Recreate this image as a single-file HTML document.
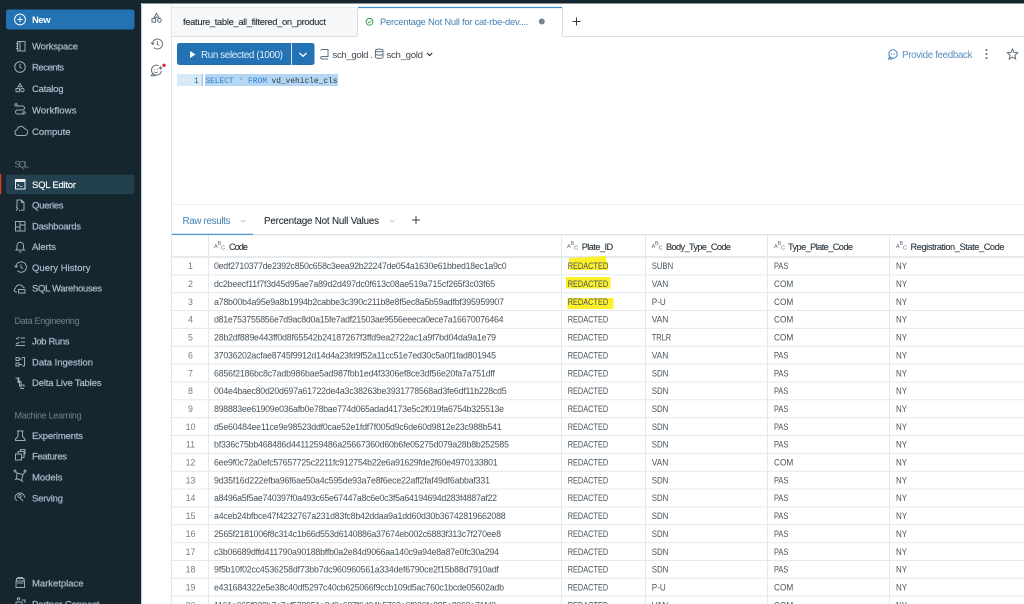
<!DOCTYPE html>
<html><head><meta charset="utf-8"><title>SQL Editor</title>
<style>
html,body{margin:0;padding:0;width:1024px;height:604px;overflow:hidden;background:#fff}
svg{display:block}
text{font-family:"Liberation Sans",sans-serif;font-size:8.8px;fill:#47535c}
.n{fill:#6f7d87;text-anchor:middle}
.s{fill:#a7bccb;font-size:9.5px;stroke:#a7bccb;stroke-width:.22}
.h{fill:#6d8595;font-size:9px}
.th{fill:#2b3740;font-size:9.2px;stroke:#2b3740;stroke-width:.12}
.tb{fill:#3c4851;font-size:9.6px}
.i{fill:none;stroke:#97adbb;stroke-width:1}
.k{fill:none;stroke:#5f6f7b;stroke-width:1}
.m{font-family:"Liberation Mono",monospace;font-size:7.9px}
.a{font-size:5.5px;fill:#5f6f7b}
</style></head><body>
<svg width="1024" height="604" viewBox="0 0 1024 604" xmlns="http://www.w3.org/2000/svg">
<filter id="b" x="0" y="0" width="100%" height="100%"><feGaussianBlur stdDeviation="0.28"/></filter>
<g filter="url(#b)">
<rect width="1024" height="604" fill="#fff"/>
<rect width="1024" height="3.5" fill="#13262f"/>
<rect width="141" height="604" fill="#13262f"/>
<rect x="141" y="3" width="1.2" height="601" fill="#c9d6e0"/>
<rect x="171" y="4" width="1" height="600" fill="#dfe6ec"/>

<rect x="6" y="9.5" width="128.5" height="20" rx="2.5" fill="#2272b4"/>
<circle cx="20" cy="19.5" r="5.4" fill="none" stroke="#fff" stroke-width="1"/>
<path d="M20 16.8v5.4M17.3 19.5h5.4" stroke="#fff" stroke-width="1"/>
<text x="32" y="22.8" textLength="18.5" style="fill:#fff;font-size:9.4px;font-weight:bold">New</text>

<rect x="0" y="174" width="1.3" height="20" fill="#d8392b"/>
<rect x="6" y="174.5" width="128.5" height="19.5" rx="2.5" fill="#22404d"/>

<g>
<path class="i" d="M17.5 41.5h7.5v9.5h-7.5zM20 41.5v9.5M16 43.5h2.5M16 46h2.5M16 48.5h2.5"/>
<circle class="i" cx="20" cy="67" r="5.3"/><path class="i" d="M20 64v3.3l1.8 1.2"/>
<path class="i" d="M20 83.5l2 3.2h-4zM16 88.5h3.4v3.2h-3.4zM20.7 90.1a1.7 1.7 0 1 0 3.4 0a1.7 1.7 0 1 0-3.4 0"/>
<path class="i" d="M16 106h6.5a2 2 0 0 1 0 4h-5a2 2 0 0 0 0 4h6.5M16 106a1.2 1.2 0 1 1 .1 0M24 114a1.2 1.2 0 1 1 .1 0"/>
<path class="i" d="M17.5 135.5a3 3 0 0 1-.5-5.8a4 4 0 0 1 7.5-1a3.5 3.5 0 0 1 .8 6.8z"/>
<path d="M15.5 179.5h9.5v9.5h-9.5z" fill="none" stroke="#e8eef2"/><path d="M15.5 179.5h9.5v2.5h-9.5z" fill="#e8eef2"/><path d="M17.5 184l1.5 1.2l-1.5 1.2M20 186.5h2.5" fill="none" stroke="#e8eef2" stroke-width=".8"/>
<path class="i" d="M17 208v-8h4.5l2.500 2.500v7.500h-3M21.500 200v2.500h2.500M16 207l1.800 1.800l-1.800 1.800M19 210.500h1.500"/>
<path class="i" d="M15.5 221.5h9.5v9.5h-9.5zM20 221.5v9.5M15.5 227h4.5M20 225h5"/>
<path class="i" d="M16 250h8.5l-1-1.5v-3a3.2 3.2 0 0 0-6.500 0v3zM19 252h2.500"/>
<path class="i" d="M16 267a5.2 5.2 0 1 1 1.500 3.700M14.800 265.500l1.200 1.800l1.800-1.200M21 264.500v3l2 1"/>
<path class="i" d="M17 292h-1a2 2 0 0 1-.5-3.800a4 4 0 0 1 7.500-1.200a3 3 0 0 1 1.500 1M18.500 289.500h6.500v3.500h-6.500z"/>
<path class="i" d="M16 338l1.200 1 2-2.200M16 343l1.200 1 2-2.200M20.500 338h4.500M20.500 342h4.500M15.500 345.500h9.500"/>
<path class="i" d="M16 357.500h3v3h-3zM16 363h3v3h-3zM22 357.500h2.500v8.500h-2.500M19 359h3M19 364.500h3"/>
<path class="i" d="M15.500 378h3.500v3.500h2v3.500h3v2M18 378v4.500h1.500v3.500h1.500v2.500h3"/>
<path class="i" d="M18 431v5.500l-2.500 2.500v1.500h9.500v-1.500l-2.500-2.500v-5.500zM17 431h6.500"/>
<path class="i" d="M15.500 454h6v6h-6zM18 454v-2.500h6v6h-2.500M20.500 451.500v-2h4.500v4.500h-1"/>
<path class="i" d="M17 473l6 1.500l-1.500 6l-5-2zM17 473l-1.500-1M23 474.500l1.500-2M21.500 480.500l1.500 1.500M16.500 478.500l-1.500 1.500M15 472a1 1 0 1 1 .1 0M25 472a1 1 0 1 1 .1 0"/>
<path class="i" d="M15 498.500a5 5 0 0 1 8.500-4l1.500 3M15 498.500l2 2.500M19.500 497.500a1.500 1.500 0 1 1 .1 0l3.500 3.500"/>
<path class="i" d="M16.500 578.500h7.500v2.500h-7.500zM16 581h8.500v6.500h-8.500zM18 578v-.5h4.500v.5M17 583h6.500"/>
<path class="i" d="M16 602h6v4h-6zM18.500 600a1.200 1.200 0 1 1 .1 0M22 600h3v3"/>
</g>

<text class="s" x="32" y="49.3" textLength="46">Workspace</text>
<text class="s" x="32" y="70.7" textLength="32">Recents</text>
<text class="s" x="32" y="92.2" textLength="31.5">Catalog</text>
<text class="s" x="32" y="113.5" textLength="44.5">Workflows</text>
<text class="s" x="32" y="134.8" textLength="38.5">Compute</text>
<text class="h" x="14.5" y="167.5" textLength="14.5">SQL</text>
<text class="s" x="32" y="188" textLength="44" style="fill:#f2f6f8;stroke:#f2f6f8">SQL Editor</text>
<text class="s" x="32" y="208.5" textLength="31.5">Queries</text>
<text class="s" x="32" y="229.5" textLength="49">Dashboards</text>
<text class="s" x="32" y="250" textLength="24">Alerts</text>
<text class="s" x="32" y="271" textLength="58.5">Query History</text>
<text class="s" x="32" y="291.5" textLength="70">SQL Warehouses</text>
<text class="h" x="14.5" y="324" textLength="65">Data Engineering</text>
<text class="s" x="32" y="344.5" textLength="37.5">Job Runs</text>
<text class="s" x="32" y="365.5" textLength="61">Data Ingestion</text>
<text class="s" x="32" y="386" textLength="69.5">Delta Live Tables</text>
<text class="h" x="14.5" y="418.5" textLength="67">Machine Learning</text>
<text class="s" x="32" y="439" textLength="51">Experiments</text>
<text class="s" x="32" y="459.5" textLength="35">Features</text>
<text class="s" x="32" y="480.5" textLength="30.5">Models</text>
<text class="s" x="32" y="501.5" textLength="31">Serving</text>
<text class="s" x="32" y="586.5" textLength="51.5">Marketplace</text>
<text class="s" x="32" y="607.5" textLength="67.5">Partner Connect</text>

<path class="k" d="M156.5 13.5l2.300 3.700h-4.600zM152 18.500h3.600v3.600h-3.600zM157.500 20.300a1.900 1.900 0 1 0 3.800 0a1.900 1.900 0 1 0-3.800 0"/>
<path class="k" d="M152.500 44a5 5 0 1 1 1.500 3.600M151 42.500l1.500 1.800l1.800-1.200M157.300 41v3.300l2 1.200"/>
<path class="k" d="M158.500 65.600A5 5 0 1 0 161.400 71M152.800 73.400L151.200 75.800H155.500"/>
<path d="M154.500 69.200h.8M157.300 69.200h.8" stroke="#5f6f7b" stroke-width="1"/>
<path d="M154 71.600c1 1.300 3 1.300 4 0" fill="none" stroke="#5f6f7b" stroke-width=".8"/>
<circle cx="164" cy="65.300" r="1.700" fill="#e0213f"/>
<path d="M160.500 65.800l.7 1.500 1.500.7-1.500.7-.7 1.500-.7-1.500-1.500-.7 1.500-.7z" fill="#5f6f7b"/>

<rect x="172" y="8" width="185" height="28" fill="#f6f8fa"/>
<path d="M172 36.500h185M562.500 36.500H1024" stroke="#d8e1e8" stroke-width="1"/>
<path d="M172 7.500h185" stroke="#e6ebef"/>
<path d="M357.500 36V9.500a2 2 0 0 1 2-2h201a2 2 0 0 1 2 2V36" fill="#fff" stroke="#d5dee5"/>
<path d="M358 7.500h204" stroke="#3a8ed0" stroke-width="1.200"/>
<text x="183" y="25" textLength="143" style="fill:#252e35;font-size:9.400px;stroke:#252e35;stroke-width:.1">feature_table_all_filtered_on_product</text>
<circle cx="369.500" cy="21.800" r="3.400" fill="none" stroke="#3a9a52" stroke-width="1"/>
<path d="M368 21.800l1.100 1.100 2-2.100" fill="none" stroke="#3a9a52" stroke-width=".8"/>
<text x="380" y="25" textLength="148.500" style="fill:#3f7fb5;font-size:9.400px">Percentage Not Null for cat-rbe-dev....</text>
<circle cx="541.800" cy="21.500" r="3" fill="#77858f"/>
<path d="M576.500 17.500v8M572.500 21.500h8" stroke="#2d3740" stroke-width="1"/>

<rect x="177" y="43" width="137.500" height="22" rx="2.500" fill="#2272b4"/>
<rect x="291" y="43" width="1" height="22" fill="#cfe2f2"/>
<path d="M190 51v7l5.500-3.500z" fill="#fff"/>
<text x="201" y="58" textLength="82" style="fill:#e6f0f8;font-size:9.800px">Run selected  (1000)</text>
<path d="M299.500 53l3.500 3.300 3.500-3.300" fill="none" stroke="#fff" stroke-width="1.300"/>
<path class="k" d="M321 50.500a1 1 0 0 1 1-1h6v7h-6a1 1 0 0 0 0 2.500h6"/>
<path class="k" d="M375.500 50.500c0-1.800 7.500-1.800 7.500 0v6.500c0 1.800-7.500 1.800-7.500 0zM375.500 50.500c0 1.800 7.500 1.800 7.500 0M375.500 53.800c0 1.800 7.500 1.800 7.500 0"/>
<text class="tb" x="332.500" y="58" textLength="36">sch_gold</text>
<text class="tb" x="370" y="58">.</text>
<text class="tb" x="386.500" y="58" textLength="36.500">sch_gold</text>
<path d="M427 53l2.600 2.500 2.600-2.500" fill="none" stroke="#2b343b" stroke-width="1.200"/>

<circle cx="893" cy="54" r="4.200" fill="none" stroke="#3f86c2" stroke-width="1"/>
<path d="M889.500 57l-1 2h4" fill="none" stroke="#3f86c2" stroke-width="1"/>
<path d="M891 54h4" stroke="#3f86c2" stroke-width=".9" stroke-dasharray="1 .6"/>
<text x="902" y="58" textLength="70.500" style="fill:#5a8fbd;font-size:9.800px">Provide feedback</text>
<circle cx="986.500" cy="50" r="1" fill="#5b6a75"/><circle cx="986.500" cy="54" r="1" fill="#5b6a75"/><circle cx="986.500" cy="58" r="1" fill="#5b6a75"/>
<path d="M1012.500 49l1.500 3.400 3.700.4-2.800 2.500.8 3.700-3.200-1.900-3.200 1.900.8-3.700-2.800-2.500 3.700-.4z" fill="none" stroke="#5b6a75" stroke-width="1"/>

<rect x="177" y="74" width="24" height="12" fill="#d6eafa"/>
<rect x="201.500" y="74" width="1.500" height="12" fill="#aebfcc"/>
<rect x="205" y="74" width="133" height="12" fill="#b5d5f5"/>
<text class="m" x="194" y="83" style="fill:#47606f">1</text>
<text class="m" x="205.500" y="83" textLength="28" style="fill:#2f81c6">SELECT</text>
<text class="m" x="238.500" y="83" style="fill:#7f9db8">*</text>
<text class="m" x="248" y="83" textLength="19" style="fill:#2f81c6">FROM</text>
<text class="m" x="271.500" y="83" textLength="66" style="fill:#2c3a44">vd_vehicle_cls</text>

<path d="M172 204.500h852" stroke="#f0f3f5"/>
<text x="182.500" y="224" textLength="48" style="fill:#3f7fb5;font-size:9.800px">Raw results</text>
<path d="M241 220l2.300 2 2.300-2" fill="none" stroke="#a8b4bd" stroke-width=".8"/>
<text x="264" y="224" textLength="115" style="fill:#252e35;font-size:9.800px;stroke:#252e35;stroke-width:.1">Percentage Not Null Values</text>
<path d="M390 220l2.300 2 2.300-2" fill="none" stroke="#a8b4bd" stroke-width=".8"/>
<path d="M416 216v8M412 220h8" stroke="#2d3740" stroke-width=".9"/>

<path d="M172 234.700h852" stroke="#d5dee6" stroke-width="1"/>
<path d="M172 234.300h81" stroke="#3a8ed0" stroke-width="1.200"/>
<path d="M172 274.850h852M172 292.700h852M172 310.550h852M172 328.400h852M172 346.250h852M172 364.100h852M172 381.950h852M172 399.800h852M172 417.650h852M172 435.500h852M172 453.350h852M172 471.200h852M172 489.050h852M172 506.900h852M172 524.750h852M172 542.600h852M172 560.450h852M172 578.300h852M172 596.150h852" stroke="#e4e9ee" stroke-width="1" fill="none"/>
<path d="M172 257h852" stroke="#dce3e9" stroke-width="1.400"/>
<path d="M208.500 235V604M561.500 235V604M645.500 235V604M767.500 235V604M889.500 235V604" stroke="#e3e8ed" stroke-width="1"/>

<path d="M569 258l37-2v5l2 1v8h-39.500z" fill="#fdf02a"/>
<path d="M566 277h44.500v11.500H566z" fill="#fdf02a"/>
<path d="M567.500 298h46v11h-46z" fill="#fdf02a"/>

<text class="a" x="214" y="248">A</text><text class="a" x="217.500" y="245">B</text><text class="a" x="221" y="249.500">C</text>
<text class="a" x="567" y="248">A</text><text class="a" x="570.500" y="245">B</text><text class="a" x="574" y="249.500">C</text>
<text class="a" x="651.500" y="248">A</text><text class="a" x="655" y="245">B</text><text class="a" x="658.500" y="249.500">C</text>
<text class="a" x="774" y="248">A</text><text class="a" x="777.500" y="245">B</text><text class="a" x="781" y="249.500">C</text>
<text class="a" x="896" y="248">A</text><text class="a" x="899.500" y="245">B</text><text class="a" x="903" y="249.500">C</text>
<text class="th" x="229" y="250" textLength="19">Code</text>
<text class="th" x="581.700" y="250" textLength="31.500">Plate_ID</text>
<text class="th" x="666" y="250" textLength="65">Body_Type_Code</text>
<text class="th" x="788" y="250" textLength="65">Type_Plate_Code</text>
<text class="th" x="910.500" y="250" textLength="94">Registration_State_Code</text>

<g transform="translate(0,269.200)"><text class="n" x="190.500">1</text><text x="214" textLength="292.700">0edf2710377de2392c850c658c3eea92b22247de054a1630e61bbed18ec1a9c0</text><text x="567.700" textLength="40.500" lengthAdjust="spacingAndGlyphs">REDACTED</text><text x="651.700" textLength="21.500" lengthAdjust="spacingAndGlyphs">SUBN</text><text x="774" textLength="14.300" lengthAdjust="spacingAndGlyphs">PAS</text><text x="896" textLength="11" lengthAdjust="spacingAndGlyphs">NY</text></g>
<g transform="translate(0,287)"><text class="n" x="190.500">2</text><text x="214" textLength="281">dc2beecf11f7f3d45d95ae7a89d2d497dc0f613c08ae519a715cf265f3c03f65</text><text x="567.700" textLength="40.500" lengthAdjust="spacingAndGlyphs">REDACTED</text><text x="651.700" textLength="16.600" lengthAdjust="spacingAndGlyphs">VAN</text><text x="774" textLength="19.300" lengthAdjust="spacingAndGlyphs">COM</text><text x="896" textLength="11" lengthAdjust="spacingAndGlyphs">NY</text></g>
<g transform="translate(0,304.900)"><text class="n" x="190.500">3</text><text x="214" textLength="290">a78b00b4a95e9a8b1994b2cabbe3c390c211b8e8f5ec8a5b59adfbf395959907</text><text x="567.700" textLength="40.500" lengthAdjust="spacingAndGlyphs">REDACTED</text><text x="651.700" textLength="14" lengthAdjust="spacingAndGlyphs">P-U</text><text x="774" textLength="19.300" lengthAdjust="spacingAndGlyphs">COM</text><text x="896" textLength="11" lengthAdjust="spacingAndGlyphs">NY</text></g>
<g transform="translate(0,322.700)"><text class="n" x="190.500">4</text><text x="214" textLength="289.500">d81e753755856e7d9ac8d0a15fe7adf21503ae9556eeeca0ece7a16670076464</text><text x="567.700" textLength="40.500" lengthAdjust="spacingAndGlyphs">REDACTED</text><text x="651.700" textLength="16.600" lengthAdjust="spacingAndGlyphs">VAN</text><text x="774" textLength="19.300" lengthAdjust="spacingAndGlyphs">COM</text><text x="896" textLength="11" lengthAdjust="spacingAndGlyphs">NY</text></g>
<g transform="translate(0,340.600)"><text class="n" x="190.500">5</text><text x="214" textLength="282">28b2df889e443ff0d8f65542b24187267f3ffd9ea2722ac1a9f7bd04da9a1e79</text><text x="567.700" textLength="40.500" lengthAdjust="spacingAndGlyphs">REDACTED</text><text x="651.700" textLength="19.500" lengthAdjust="spacingAndGlyphs">TRLR</text><text x="774" textLength="19.300" lengthAdjust="spacingAndGlyphs">COM</text><text x="896" textLength="11" lengthAdjust="spacingAndGlyphs">NY</text></g>
<g transform="translate(0,358.400)"><text class="n" x="190.500">6</text><text x="214" textLength="282">37036202acfae8745f9912d14d4a23fd9f52a11cc51e7ed30c5a0f1fad801945</text><text x="567.700" textLength="40.500" lengthAdjust="spacingAndGlyphs">REDACTED</text><text x="651.700" textLength="16.600" lengthAdjust="spacingAndGlyphs">VAN</text><text x="774" textLength="14.300" lengthAdjust="spacingAndGlyphs">PAS</text><text x="896" textLength="11" lengthAdjust="spacingAndGlyphs">NY</text></g>
<g transform="translate(0,376.300)"><text class="n" x="190.500">7</text><text x="214" textLength="281">6856f2186bc8c7adb986bae5ad987fbb1ed4f3306ef8ce3df56e20fa7a751dff</text><text x="567.700" textLength="40.500" lengthAdjust="spacingAndGlyphs">REDACTED</text><text x="651.700" textLength="16.700" lengthAdjust="spacingAndGlyphs">SDN</text><text x="774" textLength="14.300" lengthAdjust="spacingAndGlyphs">PAS</text><text x="896" textLength="11" lengthAdjust="spacingAndGlyphs">NY</text></g>
<g transform="translate(0,394.100)"><text class="n" x="190.500">8</text><text x="214" textLength="292.700">004e4baec80d20d697a61722de4a3c38263be3931778568ad3fe6df11b228cd5</text><text x="567.700" textLength="40.500" lengthAdjust="spacingAndGlyphs">REDACTED</text><text x="651.700" textLength="16.700" lengthAdjust="spacingAndGlyphs">SDN</text><text x="774" textLength="14.300" lengthAdjust="spacingAndGlyphs">PAS</text><text x="896" textLength="11" lengthAdjust="spacingAndGlyphs">NY</text></g>
<g transform="translate(0,412)"><text class="n" x="190.500">9</text><text x="214" textLength="290">898883ee61909e036afb0e78bae774d065adad4173e5c2f019fa6754b325513e</text><text x="567.700" textLength="40.500" lengthAdjust="spacingAndGlyphs">REDACTED</text><text x="651.700" textLength="16.700" lengthAdjust="spacingAndGlyphs">SDN</text><text x="774" textLength="14.300" lengthAdjust="spacingAndGlyphs">PAS</text><text x="896" textLength="11" lengthAdjust="spacingAndGlyphs">NY</text></g>
<g transform="translate(0,429.800)"><text class="n" x="190.500">10</text><text x="214" textLength="287.700">d5e60484ee11ce9e98523ddf0cae52e1fdf7f005d9c6de60d9812e23c988b541</text><text x="567.700" textLength="40.500" lengthAdjust="spacingAndGlyphs">REDACTED</text><text x="651.700" textLength="16.700" lengthAdjust="spacingAndGlyphs">SDN</text><text x="774" textLength="14.300" lengthAdjust="spacingAndGlyphs">PAS</text><text x="896" textLength="11" lengthAdjust="spacingAndGlyphs">NY</text></g>
<g transform="translate(0,447.700)"><text class="n" x="190.500">11</text><text x="214" textLength="295">bf336c75bb468486d4411259486a25667360d60b6fe05275d079a28b8b252585</text><text x="567.700" textLength="40.500" lengthAdjust="spacingAndGlyphs">REDACTED</text><text x="651.700" textLength="16.700" lengthAdjust="spacingAndGlyphs">SDN</text><text x="774" textLength="14.300" lengthAdjust="spacingAndGlyphs">PAS</text><text x="896" textLength="11" lengthAdjust="spacingAndGlyphs">NY</text></g>
<g transform="translate(0,465.500)"><text class="n" x="190.500">12</text><text x="214" textLength="283.700">6ee9f0c72a0efc57657725c2211fc912754b22e6a91629fde2f60e4970133801</text><text x="567.700" textLength="40.500" lengthAdjust="spacingAndGlyphs">REDACTED</text><text x="651.700" textLength="16.600" lengthAdjust="spacingAndGlyphs">VAN</text><text x="774" textLength="19.300" lengthAdjust="spacingAndGlyphs">COM</text><text x="896" textLength="11" lengthAdjust="spacingAndGlyphs">NY</text></g>
<g transform="translate(0,483.400)"><text class="n" x="190.500">13</text><text x="214" textLength="276">9d35f16d222efba96f6ae50a4c595de93a7e8f6ece22aff2faf49df6abbaf331</text><text x="567.700" textLength="40.500" lengthAdjust="spacingAndGlyphs">REDACTED</text><text x="651.700" textLength="16.700" lengthAdjust="spacingAndGlyphs">SDN</text><text x="774" textLength="14.300" lengthAdjust="spacingAndGlyphs">PAS</text><text x="896" textLength="11" lengthAdjust="spacingAndGlyphs">NY</text></g>
<g transform="translate(0,501.200)"><text class="n" x="190.500">14</text><text x="214" textLength="283">a8496a5f5ae740397f0a493c65e67447a8c6e0c3f5a64194694d283f4887af22</text><text x="567.700" textLength="40.500" lengthAdjust="spacingAndGlyphs">REDACTED</text><text x="651.700" textLength="16.700" lengthAdjust="spacingAndGlyphs">SDN</text><text x="774" textLength="14.300" lengthAdjust="spacingAndGlyphs">PAS</text><text x="896" textLength="11" lengthAdjust="spacingAndGlyphs">NY</text></g>
<g transform="translate(0,519.100)"><text class="n" x="190.500">15</text><text x="214" textLength="291.700">a4ceb24bfbce47f4232767a231d83fc8b42ddaa9a1dd60d30b36742819662088</text><text x="567.700" textLength="40.500" lengthAdjust="spacingAndGlyphs">REDACTED</text><text x="651.700" textLength="16.700" lengthAdjust="spacingAndGlyphs">SDN</text><text x="774" textLength="14.300" lengthAdjust="spacingAndGlyphs">PAS</text><text x="896" textLength="11" lengthAdjust="spacingAndGlyphs">NY</text></g>
<g transform="translate(0,536.900)"><text class="n" x="190.500">16</text><text x="214" textLength="287">2565f2181006f8c314c1b66d553d6140886a37674eb002c6883f313c7f270ee8</text><text x="567.700" textLength="40.500" lengthAdjust="spacingAndGlyphs">REDACTED</text><text x="651.700" textLength="16.700" lengthAdjust="spacingAndGlyphs">SDN</text><text x="774" textLength="14.300" lengthAdjust="spacingAndGlyphs">PAS</text><text x="896" textLength="11" lengthAdjust="spacingAndGlyphs">NY</text></g>
<g transform="translate(0,554.800)"><text class="n" x="190.500">17</text><text x="214" textLength="285">c3b06689dffd411790a90188bffb0a2e84d9066aa140c9a94e8a87e0fc30a294</text><text x="567.700" textLength="40.500" lengthAdjust="spacingAndGlyphs">REDACTED</text><text x="651.700" textLength="16.700" lengthAdjust="spacingAndGlyphs">SDN</text><text x="774" textLength="14.300" lengthAdjust="spacingAndGlyphs">PAS</text><text x="896" textLength="11" lengthAdjust="spacingAndGlyphs">NY</text></g>
<g transform="translate(0,572.600)"><text class="n" x="190.500">18</text><text x="214" textLength="285">9f5b10f02cc4536258df73bb7dc960960561a334def6790ce2f15b88d7910adf</text><text x="567.700" textLength="40.500" lengthAdjust="spacingAndGlyphs">REDACTED</text><text x="651.700" textLength="16.700" lengthAdjust="spacingAndGlyphs">SDN</text><text x="774" textLength="14.300" lengthAdjust="spacingAndGlyphs">PAS</text><text x="896" textLength="11" lengthAdjust="spacingAndGlyphs">NY</text></g>
<g transform="translate(0,590.500)"><text class="n" x="190.500">19</text><text x="214" textLength="290">e431684322e5e38c40df5297c40cb625066f9ccb109d5ac760c1bcde05602adb</text><text x="567.700" textLength="40.500" lengthAdjust="spacingAndGlyphs">REDACTED</text><text x="651.700" textLength="14" lengthAdjust="spacingAndGlyphs">P-U</text><text x="774" textLength="19.300" lengthAdjust="spacingAndGlyphs">COM</text><text x="896" textLength="11" lengthAdjust="spacingAndGlyphs">NY</text></g>
<g transform="translate(0,608.300)"><text class="n" x="190.500">20</text><text x="214" textLength="282">1161a065f938b7a7af578951e8d9c697f6d94b5763a6f226fa895e8069a71fd2</text><text x="567.700" textLength="40.500" lengthAdjust="spacingAndGlyphs">REDACTED</text><text x="651.700" textLength="16.600" lengthAdjust="spacingAndGlyphs">VAN</text><text x="774" textLength="19.300" lengthAdjust="spacingAndGlyphs">COM</text><text x="896" textLength="11" lengthAdjust="spacingAndGlyphs">NY</text></g>
</g>
</svg>
</body></html>
